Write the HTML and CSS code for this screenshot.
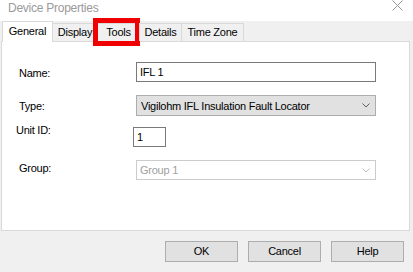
FILE: index.html
```html
<!DOCTYPE html>
<html lang="en">
<head>
  <meta charset="UTF-8">
  <title>Device Properties</title>
  <link rel="stylesheet" href="styles.css">
</head>
<body>
  <div class="window">
    <!-- Title bar -->
    <div class="titlebar">
      <span class="title">Device Properties</span>
      <svg class="close" width="11" height="11" viewBox="0 0 11 11">
        <path d="M0.5 0.5 L10.5 10.5 M10.5 0.5 L0.5 10.5" stroke="#9a9a9a" stroke-width="1" fill="none"/>
      </svg>
    </div>

    <div class="dialog">
      <!-- Tab strip -->
      <div class="tabs">
        <div class="tab active tab-general">General</div>
        <div class="tab tab-display">Display</div>
        <div class="tab tab-tools">Tools<span class="highlight"></span></div>
        <div class="tab tab-details">Details</div>
        <div class="tab tab-zone">Time Zone</div>
      </div>

      <!-- General page -->
      <div class="panel">
        <div class="row row-name">
          <span class="label">Name:</span>
          <div class="field input wide">IFL 1</div>
        </div>
        <div class="row row-type">
          <span class="label">Type:</span>
          <div class="field combo wide">
            <span>Vigilohm IFL Insulation Fault Locator</span>
            <svg width="8" height="5" viewBox="0 0 8 5"><polyline points="0.5,0.5 4,4 7.5,0.5" stroke="#606060" fill="none"/></svg>
          </div>
        </div>
        <div class="row row-unit">
          <span class="label">Unit ID:</span>
          <div class="field input unit">1</div>
        </div>
        <div class="row row-group">
          <span class="label">Group:</span>
          <div class="field combo disabled wide">
            <span>Group 1</span>
            <svg width="8" height="5" viewBox="0 0 8 5"><polyline points="0.5,0.5 4,4 7.5,0.5" stroke="#bcbcbc" fill="none"/></svg>
          </div>
        </div>
      </div>

      <!-- Dialog buttons -->
      <div class="buttons">
        <div class="button">OK</div>
        <div class="button">Cancel</div>
        <div class="button">Help</div>
      </div>
    </div>
  </div>
</body>
</html>
```

FILE: styles.css
```css
/* General body styling */
body {
  margin: 0;
  background-color: white;
  font-family: "Liberation Sans", Arial, sans-serif;
  font-size: 11px;
  letter-spacing: -0.25px;
  color: #000;
  overflow: hidden;
}

.window {
  width: 413px;
  height: 272px;
  display: flex;
  flex-direction: column;
}

/* Title bar */
.titlebar {
  height: 21px;
  flex-shrink: 0;
  display: flex;
  justify-content: space-between;
  align-items: flex-start;
  padding: 0 10px 0 8px;
  background-color: white;
}

.title {
  padding-top: 1px;
  font-size: 12px;
  line-height: 14px;
  color: #9a9a9a;
}

/* Dialog body */
.dialog {
  flex: 1;
  background-color: #f0f0f0;
}

/* Tabs */
.tabs {
  display: flex;
  align-items: flex-end;
  padding-left: 2px;
  height: 20px;
}

.tab {
  position: relative;
  height: 17px;
  line-height: 17px;
  text-align: center;
  border: 1px solid #d9d9d9;
  border-bottom: none;
  background-color: #f0f0f0;
  margin-left: -1px;
}

.tab.active {
  z-index: 1;
  height: 20px;
  line-height: 18px;
  margin-left: 0;
  margin-bottom: -1px;
  background-color: white;
}

.tab-general { width: 49px; }
.tab-display { width: 44px; }
.tab-tools { width: 41px; }
.tab-details { width: 41px; }
.tab-zone { width: 61px; }

/* Red annotation round the Tools tab */
.highlight {
  position: absolute;
  left: -5px;
  top: -6px;
  width: 37px;
  height: 18px;
  border: 5px solid #f00000;
}

/* Tab page */
.panel {
  margin-left: 1px;
  width: 407px;
  height: 168px;
  border: 1px solid #d9d9d9;
  background-color: white;
  padding-top: 20px;
}

.row {
  display: flex;
  align-items: flex-start;
  padding-left: 17px;
}

.label {
  width: 117px;
  line-height: 13px;
}

.row-name .label { padding-top: 5px; }
.row-type { margin-top: 13px; }
.row-type .label { padding-top: 5px; }
.row-unit { margin-top: 11px; padding-left: 14px; }
.row-unit .label { margin-top: -3px; }
.row-group { margin-top: 13px; }
.row-group .label { padding-top: 2px; }

/* Edit boxes and combo boxes */
.field {
  box-sizing: border-box;
  height: 20px;
  line-height: 18px;
  padding-left: 3px;
  white-space: nowrap;
}

.field.wide { width: 240px; }
.field.unit { width: 33px; }

.input {
  border: 1px solid #7a7a7a;
  background-color: white;
}

.combo {
  display: flex;
  justify-content: space-between;
  align-items: center;
  padding: 0 5px 0 4px;
  border: 1px solid #adadad;
  background-color: #e1e1e1;
}

.row-type .combo { height: 21px; }

.combo.disabled {
  padding-left: 3px;
  border-color: #cccccc;
  background-color: white;
  color: #a0a0a0;
}

/* Buttons */
.buttons {
  display: flex;
  justify-content: flex-end;
  gap: 10px;
  margin-top: 10px;
  padding-right: 9px;
}

.button {
  box-sizing: border-box;
  width: 73px;
  height: 21px;
  line-height: 19px;
  text-align: center;
  border: 1px solid #adadad;
  background-color: #e1e1e1;
}
```
